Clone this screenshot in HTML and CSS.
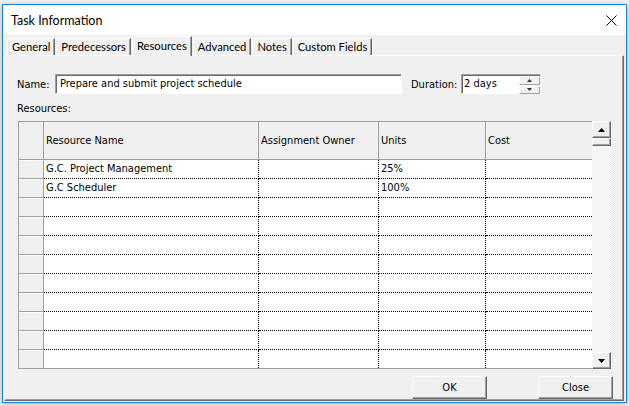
FILE: index.html
```html
<!DOCTYPE html>
<html lang="en">
<head>
<meta charset="utf-8">
<title>Task Information</title>
<link rel="stylesheet" href="styles.css">
</head>
<body>
<div class="dialog">
  <div class="titlebar">
    <span class="title">Task Information</span>
    <svg class="close" width="11" height="11" viewBox="0 0 11 11"><path d="M0.5 0.5L10.5 10.5M10.5 0.5L0.5 10.5" stroke="#000" stroke-width="1" fill="none"/></svg>
  </div>
  <div class="tabs">
    <div class="tab">General</div>
    <div class="tab">Predecessors</div>
    <div class="tab active">Resources</div>
    <div class="tab">Advanced</div>
    <div class="tab">Notes</div>
    <div class="tab">Custom Fields</div>
  </div>
  <div class="panel">
    <div class="field-row">
      <span class="lbl name-lbl">Name:</span>
      <div class="input name-input">Prepare and submit project schedule</div>
      <span class="lbl dur-lbl">Duration:</span>
      <div class="input dur-input">
        <span class="dur-val">2 days</span>
        <div class="spin">
          <div class="spin-btn"><svg width="5" height="3" viewBox="0 0 5 3"><path d="M0 3h5L2.5 0z" fill="#333"/></svg></div>
          <div class="spin-btn"><svg width="5" height="3" viewBox="0 0 5 3"><path d="M0 0h5L2.5 3z" fill="#333"/></svg></div>
        </div>
      </div>
    </div>
    <div class="lbl res-lbl">Resources:</div>
    <div class="grid-wrap">
      <div class="grid">
        <div class="row head">
          <div class="h"></div><div class="h">Resource Name</div><div class="h">Assignment Owner</div><div class="h">Units</div><div class="h">Cost</div>
        </div>
        <div class="row">
          <div class="rh"></div><div class="c">G.C. Project Management</div><div class="c"></div><div class="c">25%</div><div class="c"></div>
        </div>
        <div class="row">
          <div class="rh"></div><div class="c">G.C Scheduler</div><div class="c"></div><div class="c">100%</div><div class="c"></div>
        </div>
        <div class="row"><div class="rh"></div><div class="c"></div><div class="c"></div><div class="c"></div><div class="c"></div></div>
        <div class="row"><div class="rh"></div><div class="c"></div><div class="c"></div><div class="c"></div><div class="c"></div></div>
        <div class="row"><div class="rh"></div><div class="c"></div><div class="c"></div><div class="c"></div><div class="c"></div></div>
        <div class="row"><div class="rh"></div><div class="c"></div><div class="c"></div><div class="c"></div><div class="c"></div></div>
        <div class="row"><div class="rh"></div><div class="c"></div><div class="c"></div><div class="c"></div><div class="c"></div></div>
        <div class="row"><div class="rh"></div><div class="c"></div><div class="c"></div><div class="c"></div><div class="c"></div></div>
        <div class="row"><div class="rh"></div><div class="c"></div><div class="c"></div><div class="c"></div><div class="c"></div></div>
        <div class="row"><div class="rh"></div><div class="c"></div><div class="c"></div><div class="c"></div><div class="c"></div></div>
        <div class="row"><div class="rh"></div><div class="c"></div><div class="c"></div><div class="c"></div><div class="c"></div></div>
      </div>
      <div class="vscroll">
        <div class="sbtn"><svg width="7" height="4" viewBox="0 0 7 4"><path d="M0 4h7L3.5 0z" fill="#000"/></svg></div>
        <div class="thumb"></div>
        <div class="track"></div>
        <div class="sbtn"><svg width="7" height="4" viewBox="0 0 7 4"><path d="M0 0h7L3.5 4z" fill="#000"/></svg></div>
      </div>
    </div>
    <div class="buttons">
      <button class="btn">OK</button>
      <button class="btn">Close</button>
    </div>
  </div>
</div>
</body>
</html>
```
FILE: styles.css
```css
* { box-sizing: border-box; }
html, body { margin: 0; padding: 0; }
body {
  width: 629px;
  height: 406px;
  overflow: hidden;
  background: #f2f2f2;
  font-family: "DejaVu Sans Condensed", "Liberation Sans", sans-serif;
  font-stretch: condensed;
  font-size: 11px;
  color: #000;
}
.dialog {
  margin: 4px 0 0 2px;
  width: 625px;
  height: 399px;
  border: 1px solid #1883d7;
  background: #f0f0f0;
  box-shadow: 0 1px 5px rgba(0, 0, 0, 0.3);
  display: flex;
  flex-direction: column;
}
.titlebar {
  height: 30px;
  flex: none;
  background: #fff;
  display: flex;
  align-items: center;
  justify-content: space-between;
  padding: 0 9px 0 8px;
}
.title {
  font-family: Lato, "Noto Sans", sans-serif;
  font-size: 12.5px;
  font-stretch: normal;
}
.close { display: block; }
.tabs {
  height: 20px;
  flex: none;
  display: flex;
  align-items: flex-end;
  padding-left: 4px;
}
.tab {
  height: 17px;
  padding: 0 4px;
  margin-right: 1px;
  font-family: Lato, "Noto Sans", sans-serif;
  font-stretch: normal;
  font-size: 11.2px;
  line-height: 16px;
  white-space: nowrap;
  border-top: 1px solid #fff;
  border-left: 1px solid #fff;
  border-right: 1px solid #696969;
  box-shadow: inset -1px 0 #a0a0a0;
  background: #f0f0f0;
}
.tab.active {
  height: 20px;
  margin-bottom: -1px;
  padding-top: 1px;
  line-height: 15px;
  position: relative;
  z-index: 1;
}
.panel {
  flex: 1;
  margin: 0 2px 1px 1px;
  border-top: 1px solid #fff;
  border-left: 1px solid #fff;
  border-right: 1px solid #696969;
  border-bottom: 1px solid #696969;
  box-shadow: inset -1px -1px #a0a0a0;
  display: flex;
  flex-direction: column;
}
.field-row {
  margin: 18px 0 0 12px;
  height: 20px;
  display: flex;
  align-items: center;
}
.lbl { line-height: 13px; }
.name-lbl { width: 38px; }
.dur-lbl { width: 50px; margin-left: 9px; }
.input {
  height: 20px;
  background: #fff;
  border: 1px solid;
  border-color: #a0a0a0 #fff #fff #a0a0a0;
  box-shadow: inset 1px 1px #696969;
  line-height: 17px;
  padding-left: 4px;
  white-space: nowrap;
}
.name-input { width: 347px; }
.dur-input {
  width: 80px;
  display: flex;
  align-items: flex-start;
  padding-left: 2px;
}
.dur-val { flex: 1; }
.spin {
  width: 21px;
  height: 18px;
  margin-top: 1px;
  display: flex;
  flex-direction: column;
  gap: 1px;
}
.spin-btn {
  flex: 1;
  background: #f0f0f0;
  border: 1px solid;
  border-color: #fff #a0a0a0 #a0a0a0 #fff;
  display: flex;
  align-items: center;
  justify-content: center;
}
.spin-btn svg { display: block; }
.res-lbl { margin: 8px 0 0 12px; height: 13px; }
.grid-wrap {
  margin: 6px 0 0 13px;
  height: 248px;
  display: flex;
}
.grid {
  width: 574px;
  display: grid;
  grid-template-columns: 25px 215px 120px 107px 106px;
  grid-template-rows: 38px repeat(10, 19px) 18px;
  border-top: 1px solid #a0a0a0;
  border-left: 1px solid #a0a0a0;
  border-bottom: 1px solid #a0a0a0;
}
.row { display: contents; }
.h {
  background: #f0f0f0;
  border-right: 1px solid #a0a0a0;
  border-bottom: 1px solid #a0a0a0;
  display: flex;
  align-items: center;
  padding: 0 0 0 2px;
  white-space: nowrap;
}
.h:last-child { border-right: none; }
.rh {
  background: #f0f0f0;
  border-top: 1px solid #fff;
  border-right: 1px solid #a0a0a0;
  border-bottom: 1px solid #a0a0a0;
}
.c {
  background: #fff;
  border-right: 1px dotted #000;
  border-bottom: 1px dotted #000;
  padding-left: 2px;
  line-height: 18px;
  white-space: nowrap;
}
.c:last-child { border-right: none; }
.row:last-child .c, .row:last-child .rh { border-bottom: none; }
.vscroll {
  width: 19px;
  display: flex;
  flex-direction: column;
}
.sbtn, .thumb {
  background: #f0f0f0;
  border: 1px solid;
  border-color: #fff #696969 #696969 #fff;
  box-shadow: inset -1px -1px #a0a0a0;
}
.sbtn {
  height: 17px;
  display: flex;
  align-items: center;
  justify-content: center;
}
.sbtn svg { display: block; }
.thumb { height: 8px; }
.track {
  flex: 1;
  background: repeating-conic-gradient(#ffffff 0 25%, #ececec 0 50%) 0 0 / 2px 2px;
}
.buttons {
  margin-top: 7px;
  padding-right: 10px;
  display: flex;
  justify-content: flex-end;
  gap: 51px;
}
.btn {
  width: 75px;
  height: 23px;
  margin: 0;
  padding: 0;
  font: inherit;
  font-stretch: condensed;
  color: #000;
  background: #f0f0f0;
  border: 1px solid;
  border-color: #fff #696969 #696969 #fff;
  box-shadow: inset -1px -1px #a0a0a0;
}
```
